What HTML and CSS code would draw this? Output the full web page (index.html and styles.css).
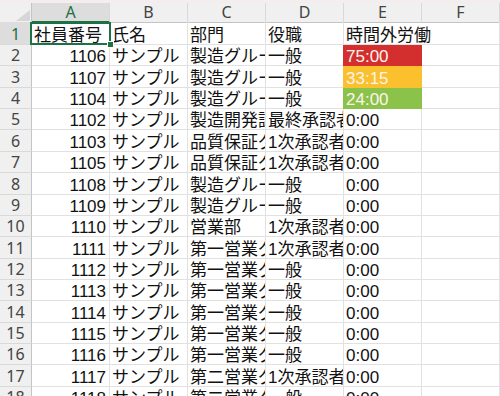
FILE: index.html
```html
<!DOCTYPE html>
<html lang="ja">
<head>
<meta charset="utf-8">
<link rel="stylesheet" href="styles.css">
</head>
<body>
<div class="sheet">
  <div class="band"></div>
  <div class="row head">
    <div class="corner"><span class="tri"></span></div>
    <div class="ch sel">A</div>
    <div class="ch">B</div>
    <div class="ch">C</div>
    <div class="ch">D</div>
    <div class="ch">E</div>
    <div class="ch">F</div>
  </div>
  <div class="row r1">
    <div class="rh sel">1</div>
    <div class="c">社員番号</div>
    <div class="c">氏名</div>
    <div class="c">部門</div>
    <div class="c">役職</div>
    <div class="c over">時間外労働</div>
    <div class="c"></div>
  </div>
  <div class="row"><div class="rh">2</div><div class="c num">1106</div><div class="c">サンプル</div><div class="c">製造グループ</div><div class="c">一般</div><div class="c fill red">75:00</div><div class="c"></div></div>
  <div class="row"><div class="rh">3</div><div class="c num">1107</div><div class="c">サンプル</div><div class="c">製造グループ</div><div class="c">一般</div><div class="c fill orange">33:15</div><div class="c"></div></div>
  <div class="row"><div class="rh">4</div><div class="c num">1104</div><div class="c">サンプル</div><div class="c">製造グループ</div><div class="c">一般</div><div class="c fill green">24:00</div><div class="c"></div></div>
  <div class="row"><div class="rh">5</div><div class="c num">1102</div><div class="c">サンプル</div><div class="c">製造開発課</div><div class="c">最終承認者</div><div class="c">0:00</div><div class="c"></div></div>
  <div class="row"><div class="rh">6</div><div class="c num">1103</div><div class="c">サンプル</div><div class="c">品質保証グループ</div><div class="c">1次承認者</div><div class="c">0:00</div><div class="c"></div></div>
  <div class="row"><div class="rh">7</div><div class="c num">1105</div><div class="c">サンプル</div><div class="c">品質保証グループ</div><div class="c">1次承認者</div><div class="c">0:00</div><div class="c"></div></div>
  <div class="row"><div class="rh">8</div><div class="c num">1108</div><div class="c">サンプル</div><div class="c">製造グループ</div><div class="c">一般</div><div class="c">0:00</div><div class="c"></div></div>
  <div class="row"><div class="rh">9</div><div class="c num">1109</div><div class="c">サンプル</div><div class="c">製造グループ</div><div class="c">一般</div><div class="c">0:00</div><div class="c"></div></div>
  <div class="row"><div class="rh">10</div><div class="c num">1110</div><div class="c">サンプル</div><div class="c">営業部</div><div class="c">1次承認者</div><div class="c">0:00</div><div class="c"></div></div>
  <div class="row"><div class="rh">11</div><div class="c num">1111</div><div class="c">サンプル</div><div class="c">第一営業グループ</div><div class="c">1次承認者</div><div class="c">0:00</div><div class="c"></div></div>
  <div class="row"><div class="rh">12</div><div class="c num">1112</div><div class="c">サンプル</div><div class="c">第一営業グループ</div><div class="c">一般</div><div class="c">0:00</div><div class="c"></div></div>
  <div class="row"><div class="rh">13</div><div class="c num">1113</div><div class="c">サンプル</div><div class="c">第一営業グループ</div><div class="c">一般</div><div class="c">0:00</div><div class="c"></div></div>
  <div class="row"><div class="rh">14</div><div class="c num">1114</div><div class="c">サンプル</div><div class="c">第一営業グループ</div><div class="c">一般</div><div class="c">0:00</div><div class="c"></div></div>
  <div class="row"><div class="rh">15</div><div class="c num">1115</div><div class="c">サンプル</div><div class="c">第一営業グループ</div><div class="c">一般</div><div class="c">0:00</div><div class="c"></div></div>
  <div class="row"><div class="rh">16</div><div class="c num">1116</div><div class="c">サンプル</div><div class="c">第一営業グループ</div><div class="c">一般</div><div class="c">0:00</div><div class="c"></div></div>
  <div class="row"><div class="rh">17</div><div class="c num">1117</div><div class="c">サンプル</div><div class="c">第二営業グループ</div><div class="c">1次承認者</div><div class="c">0:00</div><div class="c"></div></div>
  <div class="row"><div class="rh">18</div><div class="c num">1118</div><div class="c">サンプル</div><div class="c">第二営業グループ</div><div class="c">一般</div><div class="c">0:00</div><div class="c"></div></div>
  <div class="selbox"></div>
  <div class="handle"></div>
</div>
</body>
</html>
```

FILE: styles.css
```css
html, body {
  margin: 0;
  padding: 0;
  background: #ffffff;
  overflow: hidden;
}

body {
  font-family: "Liberation Sans", "Noto Sans CJK JP", sans-serif;
}

.sheet {
  position: relative;
  width: 500px;
  height: 396px;
  overflow: hidden;
}

.band {
  height: 3px;
  background: #f3eded;
}

.row {
  display: grid;
  grid-template-columns: 32px repeat(6, 78px);
  height: 21.36px;
}

.row.head {
  height: 19px;
  background: #f0f0f0;
}

.row.r1 {
  height: 23px;
}

.corner {
  box-sizing: border-box;
  border-right: 1px solid #c4c4c4;
  border-bottom: 1px solid #c4c4c4;
  display: flex;
  align-items: flex-end;
  justify-content: flex-end;
  padding: 0 1px 1px 0;
}

.tri {
  width: 0;
  height: 0;
  border-left: 14px solid transparent;
  border-bottom: 11px solid #d6d6d6;
}

.ch {
  box-sizing: border-box;
  border-right: 1px solid #d9d9d9;
  border-bottom: 1px solid #c4c4c4;
  font-family: "Noto Sans", "Liberation Sans", sans-serif;
  font-size: 16px;
  line-height: 18px;
  color: #444444;
  text-align: center;
}

.ch.sel {
  background: #dddddd;
  color: #1e6e42;
  border-bottom: 2px solid #1e7145;
}

.rh {
  box-sizing: border-box;
  background: #f0f0f0;
  border-right: 1px solid #c4c4c4;
  border-bottom: 1px solid #d9d9d9;
  font-family: "Noto Sans", "Liberation Sans", sans-serif;
  font-size: 16px;
  line-height: 16px;
  color: #444444;
  display: flex;
  align-items: flex-end;
  justify-content: center;
  padding-bottom: 2px;
}

.rh.sel {
  background: #dddddd;
  color: #1e6e42;
}

.c {
  box-sizing: border-box;
  border-right: 1px solid #e1e1e1;
  border-bottom: 1px solid #e1e1e1;
  font-size: 17px;
  line-height: 14px;
  color: #111111;
  white-space: nowrap;
  overflow: hidden;
  display: flex;
  align-items: flex-end;
  padding: 0 2px 1px 2px;
}

.c.num {
  justify-content: flex-end;
  padding-right: 3px;
}

.c.over {
  overflow: visible;
  border-right-color: transparent;
}

.c.fill {
  border-color: transparent;
  color: #fdf3ec;
}

.c.red {
  background: #d32f2f;
  box-shadow: -1px 0 0 #d32f2f;
}

.c.orange {
  background: #fbc02d;
  box-shadow: -1px 0 0 #fbc02d;
}

.c.green {
  background: #8bc34a;
  box-shadow: -1px 0 0 #8bc34a;
}

.selbox {
  position: absolute;
  left: 30px;
  top: 22px;
  width: 81px;
  height: 23px;
  box-sizing: border-box;
  border: 2px solid #1e7145;
}

.handle {
  position: absolute;
  left: 107px;
  top: 41px;
  width: 5px;
  height: 5px;
  background: #1e7145;
  border: 1px solid #ffffff;
}
```
